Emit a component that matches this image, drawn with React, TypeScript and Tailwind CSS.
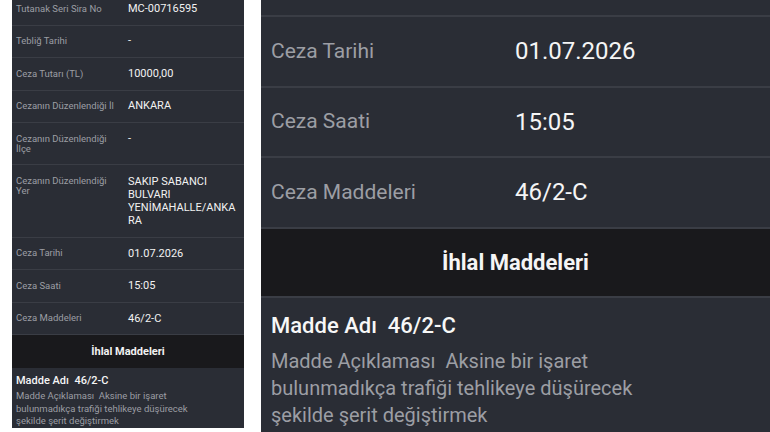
import React from 'react';

type Row = { label: React.ReactNode; value: React.ReactNode; tall?: boolean };

const smallRows: Row[] = [
  { label: 'Tutanak Seri Sira No', value: 'MC-00716595' },
  { label: 'Tebliğ Tarihi', value: '-' },
  { label: 'Ceza Tutarı (TL)', value: '10000,00' },
  { label: 'Cezanın Düzenlendiği İl', value: 'ANKARA' },
  { label: <>Cezanın Düzenlendiği<br />İlçe</>, value: '-' },
  {
    label: <>Cezanın Düzenlendiği<br />Yer</>,
    value: <>SAKIP SABANCI<br />BULVARI<br />YENİMAHALLE/ANKA<br />RA</>,
    tall: true,
  },
  { label: 'Ceza Tarihi', value: '01.07.2026' },
  { label: 'Ceza Saati', value: '15:05' },
  { label: 'Ceza Maddeleri', value: '46/2-C' },
];

const bigRows: Row[] = [
  { label: 'Ceza Tarihi', value: '01.07.2026' },
  { label: 'Ceza Saati', value: '15:05' },
  { label: 'Ceza Maddeleri', value: '46/2-C' },
];

// left: the whole ticket at phone size
const SmallPanel: React.FC = () => (
  <div className="w-[232px] shrink-0 bg-[#2a2d35] -mt-[7px]">
    {smallRows.map((r, i) => (
      <div key={i} className="flex items-start border-b border-[#3a3d45] py-[9.75px]">
        <div className="w-[116px] shrink-0 pl-[4px] text-[9.5px] leading-[10.5px] pt-[0.75px] text-[#9c9ea4] whitespace-nowrap">
          {r.label}
        </div>
        <div className={r.tall ? 'text-[11px] leading-[13px] text-[#f2f2f2]' : 'text-[11px] leading-[12px] text-[#f2f2f2]'}>
          {r.value}
        </div>
      </div>
    ))}
    <div className="h-[33px] flex items-center justify-center bg-[#19191c] text-[11px] font-bold text-[#f2f2f2]">
      İhlal Maddeleri
    </div>
    <div className="px-[4px] pt-[6px]">
      <div className="text-[11px] leading-[13px] font-medium text-[#f5f5f5] whitespace-pre">Madde Adı  46/2-C</div>
      <div className="mt-[3px] text-[9.5px] leading-[12.5px] text-[#9c9ea4]">
        <span className="whitespace-pre">Madde Açıklaması  </span>Aksine bir işaret
        <br />bulunmadıkça trafiği tehlikeye düşürecek
        <br />şekilde şerit değiştirmek
      </div>
    </div>
  </div>
);

// right: same screen zoomed in
const BigPanel: React.FC = () => (
  <div className="flex-1 bg-[#2a2d35]">
    <div className="h-[17px] border-b-2 border-[#3a3d45]" />
    {bigRows.map((r, i) => (
      <div key={i} className="h-[70.5px] flex items-center border-b-2 border-[#3a3d45]">
        <div className="w-[254px] shrink-0 pl-[10px] text-[21px] text-[#9c9ea4]">{r.label}</div>
        <div className="text-[24px] text-[#f5f5f5]">{r.value}</div>
      </div>
    ))}
    <div className="h-[69px] flex items-center justify-center bg-[#19191c] border-b-2 border-[#3a3d45] text-[22px] font-bold text-[#f5f5f5]">
      İhlal Maddeleri
    </div>
    <div className="pl-[10px] pt-[14px]">
      <div className="text-[22px] leading-[28px] font-medium text-[#f7f7f7] whitespace-pre">Madde Adı  46/2-C</div>
      <div className="mt-[8px] text-[20px] leading-[27px] text-[#9c9ea4]">
        <span className="whitespace-pre">Madde Açıklaması  </span>Aksine bir işaret
        <br />bulunmadıkça trafiği tehlikeye düşürecek
        <br />şekilde şerit değiştirmek
      </div>
    </div>
  </div>
);

const App: React.FC = () => {
  return (
    <div className="w-[770px] h-[432px] overflow-hidden bg-white flex items-start gap-[17px] pl-[12px] font-['Roboto',sans-serif]">
      <SmallPanel />
      <div className="flex-1 h-full flex">
        <BigPanel />
      </div>
    </div>
  );
};

export default App;
